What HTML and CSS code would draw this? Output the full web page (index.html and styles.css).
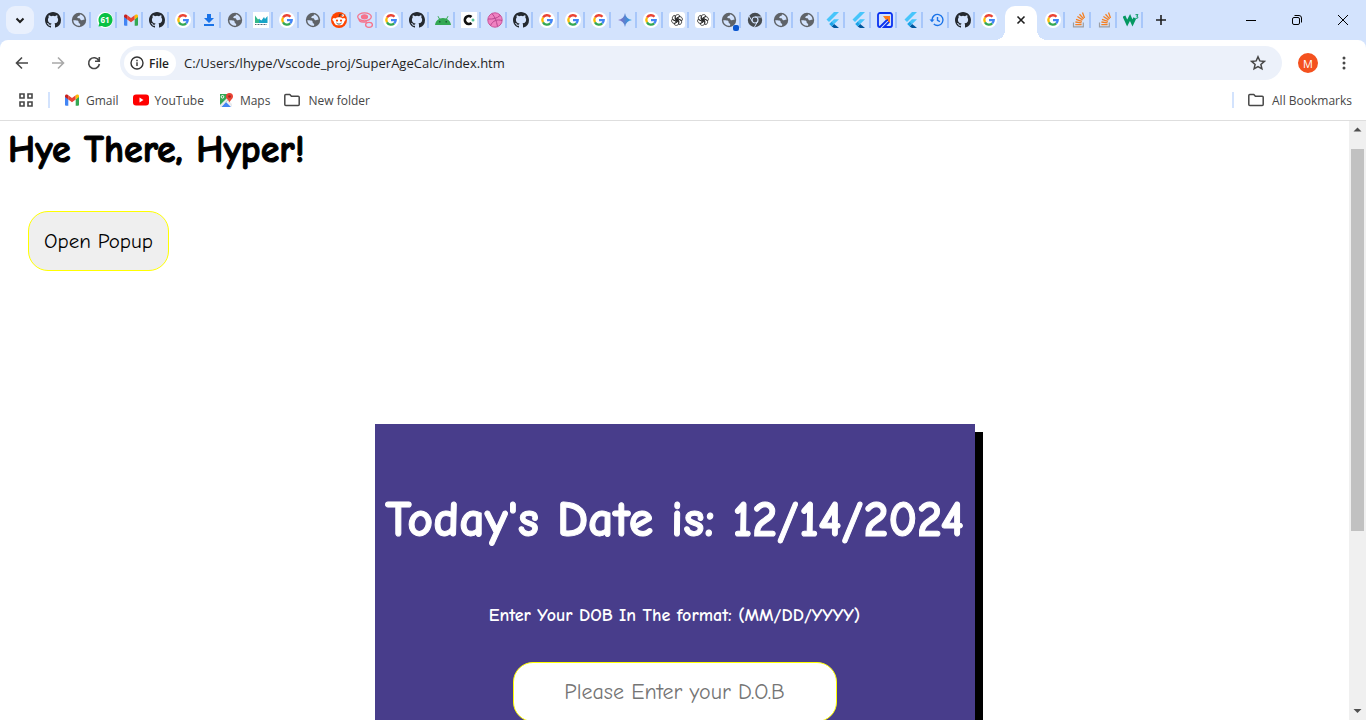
FILE: index.html
```html
<!DOCTYPE html>
<html lang="en">
<head>
<meta charset="utf-8">
<title>Super Age Calc</title>
<link rel="stylesheet" href="styles.css">
<script src="tabs.js" defer></script>
</head>
<body>
<svg class="sprite" aria-hidden="true">
  <symbol id="github" viewBox="0 0 16 16"><path fill="#24292f" d="M8 0C3.58 0 0 3.58 0 8c0 3.54 2.29 6.53 5.47 7.59.4.07.55-.17.55-.38 0-.19-.01-.82-.01-1.49-2.01.37-2.53-.49-2.69-.94-.09-.23-.48-.94-.82-1.13-.28-.15-.68-.52-.01-.53.63-.01 1.08.58 1.23.82.72 1.21 1.87.87 2.33.66.07-.52.28-.87.51-1.07-1.78-.2-3.64-.89-3.64-3.95 0-.87.31-1.59.82-2.15-.08-.2-.36-1.02.08-2.12 0 0 .67-.21 2.2.82a7.6 7.6 0 0 1 4 0c1.53-1.04 2.2-.82 2.2-.82.44 1.1.16 1.92.08 2.12.51.56.82 1.27.82 2.15 0 3.07-1.87 3.75-3.65 3.95.29.25.54.73.54 1.48 0 1.07-.01 1.93-.01 2.2 0 .21.15.46.55.38A8.01 8.01 0 0 0 16 8c0-4.42-3.58-8-8-8z"/></symbol>
  <symbol id="globe" viewBox="0 0 16 16"><circle cx="8" cy="8" r="7.2" fill="#5f6368"/><path fill="#d3e3fd" d="M2.2 8.3c1.900 0 4.100-.1 5 .8.700.800.200 1.600.900 2.100.800.500 1.200.300 1.100 1.300l-.2 1.200A5.900 5.900 0 0 1 2.200 8.300zM8.900 2.300c.200 1.200-.1 1.500-1.300 1.700-1 .200-.8 1-1.500 1.300.2 1 1.200.9 2.200 1 1.100.2 1 1.800 2 2 1 .2 1.600-.7 3.200-.4A5.900 5.900 0 0 0 8.900 2.300z"/></symbol>
  <symbol id="google" viewBox="0 0 16 16"><circle cx="8" cy="8" r="8" fill="#fff"/><g fill="none" stroke-width="2.300"><path stroke="#ea4335" d="M4 5.500A4.700 4.700 0 0 1 11.500 4.800"/><path stroke="#fbbc05" d="M4 10.300a4.700 4.700 0 0 1 0-4.800"/><path stroke="#34a853" d="M11.200 11.400A4.700 4.700 0 0 1 4 10.300"/><path stroke="#4285f4" d="M8 8.200h4.700a4.700 4.700 0 0 1-1.500 3.200"/></g></symbol>
  <symbol id="gmail" viewBox="0 0 16 16"><path fill="#4285f4" d="M1 4.500l3.300 2.400v6.800H2a1 1 0 0 1-1-1z"/><path fill="#34a853" d="M15 4.500l-3.300 2.400v6.800H14a1 1 0 0 0 1-1z"/><path fill="#ea4335" d="M4.300 3.300L8 6l3.700-2.700v4.100L8 10.200 4.300 7.400z"/><path fill="#c5221f" d="M1 4c0-1.600 1.500-2 2.600-1.200l.7.5v4.100L1 5z"/><path fill="#fbbc04" d="M15 4c0-1.600-1.500-2-2.600-1.200l-.7.500v4.100L15 5z"/></symbol>
  <symbol id="whatsapp" viewBox="0 0 16 16"><circle cx="8" cy="8" r="8" fill="#fff"/><path d="M1.500 14.500l.8-3.300A7 7 0 1 1 5 14z" fill="#08c143"/></symbol>
  <symbol id="download" viewBox="0 0 16 16"><path fill="#1a73e8" d="M6 2h4v4h3L8 11 3 6h3zM3 12h10v2H3z"/></symbol>
  <symbol id="mw" viewBox="0 0 16 16"><path fill="#fff" d="M0 0h16v16H0z"/><path fill="#35b98a" d="M2 3.500l3 4 1.500-1V11H2z"/><path fill="#18a4c7" d="M6 7l2.500 1.500L11 5l1 2 2.500-3v7H6z"/><path stroke="#567" stroke-dasharray="1 .5" d="M2 12.500h12"/></symbol>
  <symbol id="reddit" viewBox="0 0 16 16"><circle cx="8" cy="8" r="8" fill="#ff4500"/><circle cx="3" cy="7.600" r="1.500" fill="#fff"/><circle cx="13" cy="7.600" r="1.500" fill="#fff"/><ellipse cx="8" cy="9.300" rx="5.300" ry="4" fill="#fff"/><circle cx="11.700" cy="3.500" r="1.200" fill="#fff"/><path d="M8 5l.6-2.500 3 .8M5.500 11c1.500 1.500 3.500 1.500 5 0" fill="none" stroke="#243c44" stroke-width=".8"/><circle cx="6" cy="8.600" r="1.100" fill="#ff4500"/><circle cx="10" cy="8.600" r="1.100" fill="#ff4500"/></symbol>
  <symbol id="rings" viewBox="0 0 16 16"><g fill="none" stroke="#f5738c" stroke-width="1.300"><ellipse cx="7.500" cy="4.800" rx="6.800" ry="4"/><ellipse cx="7.500" cy="4.800" rx="3" ry="2" fill="#f5738c"/><ellipse cx="12" cy="12.800" rx="3.400" ry="2.500"/><path d="M2 7c0 2 2 3 4 3h4"/></g></symbol>
  <symbol id="android" viewBox="0 0 16 16"><path fill="#34a853" d="M0 13c.3-3 2-5 4-6L2.500 4.300l.7-.4L4.800 6.500a9 9 0 0 1 6.400 0l1.600-2.600.7.400L12 7c2 1 3.700 3 4 6z"/><path fill="#1b5e36" d="M4 9h1.500v1.500H4zM10.500 9H12v1.500h-1.500z"/></symbol>
  <symbol id="cdot" viewBox="0 0 16 16"><path fill="#fff" d="M0 0h16v16H0z"/><path fill="none" stroke="#111" stroke-width="2.600" d="M10.500 5A4 4 0 1 0 10.500 11"/><circle cx="12" cy="8" r="1.500" fill="#56c596"/></symbol>
  <symbol id="dribbble" viewBox="0 0 16 16"><circle cx="8" cy="8" r="7.200" fill="#f082c1" stroke="#c9539b"/><path d="M5 1.500C8 5 9.500 9 10.500 14.500M1 7c5 .3 9-.5 12-3.500M3.500 13.500C6 8.500 10 7 15 8.500" fill="none" stroke="#b8478f"/></symbol>
  <symbol id="gemini" viewBox="0 0 16 16"><path fill="url(#gem)" d="M8 1c.6 4 3 6.400 7 7-4 .6-6.400 3-7 7-.6-4-3-6.400-7-7 4-.6 6.400-3 7-7z"/></symbol>
  <linearGradient id="gem"><stop stop-color="#9168c0"/><stop offset=".5" stop-color="#5684d1"/><stop offset="1" stop-color="#1ba1e3"/></linearGradient>
  <symbol id="gpt" viewBox="0 0 16 16"><rect width="16" height="16" rx="3" fill="#fff"/><g fill="none" stroke="#222" stroke-width=".8"><path id="petal" d="M6.300 9V5.200c0-3.200 4-3.300 4.700-1L7.800 6.100v2.800"/><use href="#petal" transform="rotate(60 8 8)"/><use href="#petal" transform="rotate(120 8 8)"/><use href="#petal" transform="rotate(180 8 8)"/><use href="#petal" transform="rotate(240 8 8)"/><use href="#petal" transform="rotate(300 8 8)"/></g></symbol>
  <symbol id="chromium" viewBox="0 0 16 16"><circle cx="8" cy="8" r="7.200" fill="#474c50"/><circle cx="8" cy="8" r="3" fill="none" stroke="#d3e3fd" stroke-width="1.200"/><path stroke="#d3e3fd" d="M8 5h6.500M5.400 9.500L2 4M10.600 9.500L7.500 15"/></symbol>
  <symbol id="flutter" viewBox="0 0 16 16"><path fill="#47c5fb" d="M9 0h5L4 10 1.500 7.500zM9 7.200h5L9.200 12 6.600 9.500z"/><path fill="#00569e" d="M6.700 14.400L9.200 12l4.800 4H9z"/><path fill="#1ba3e8" d="M4.200 12l2.500-2.500L9.200 12l-2.500 2.500z"/></symbol>
  <symbol id="arrowbox" viewBox="0 0 16 16"><path d="M10 1H3a2 2 0 0 0-2 2v10q0 2 2 2l9-9v4l-5 5h6a2 2 0 0 0 2-2V3a2 2 0 0 0-2-2z" fill="#d3e3fd" stroke="#0a32f0" stroke-width="1.800"/><path fill="#ff7a18" d="M6 4h7v7l-2-2V7L9 8z"/></symbol>
  <symbol id="history" viewBox="0 0 16 16"><path fill="none" stroke="#1a73e8" stroke-width="1.400" d="M3 8a5.500 5.500 0 1 1 1.800 4M8.500 5v3.300l2.400 1.400"/><path fill="#1a73e8" d="M.5 7.500h5L3 10.200z"/></symbol>
  <symbol id="stack" viewBox="0 0 16 16"><path fill="none" stroke="#9b9ea3" stroke-width="1.200" d="M2.500 10.500v4.300h9.800v-4.300"/><path fill="none" stroke="#f48024" stroke-width="1.300" d="M4.300 12.600h6.300M4.400 10l6.200.9M5 7.300l5.900 2M6.400 4.500l5.200 3.400M8.500 2.300l4.100 4.600M11.500.6l2 5.300"/></symbol>
  <symbol id="w3" viewBox="0 0 16 16"><path fill="none" stroke="#059862" stroke-width="3" d="M1 4l3.200 7L7 5.500l2.500 5.500L11.800 6"/><path fill="none" stroke="#059862" d="M12.500 2.700H15L13.700 4.300q1.600.2 1.200 1.400-.7 1-2.200.5"/></symbol>
  <symbol id="folder" viewBox="0 0 16 16"><path fill="none" stroke="#474747" stroke-width="1.500" stroke-linejoin="round" d="M.8 3.500q0-1 1-1h4l1.600 1.800h6.800q1 0 1 1v7.200q0 1-1 1H1.800q-1 0-1-1z"/></symbol>
</svg>

<header class="browser">
  <nav class="tabstrip" aria-label="Tabs">
    <button class="tab-search" aria-label="Search tabs"><svg viewBox="0 0 16 16"><path d="M4.500 6.500L8 10l3.500-3.500"/></svg></button>
    <div class="tabs" id="tabs-before"></div>
    <button class="tab-active" aria-label="Close tab"><svg viewBox="0 0 16 16"><path d="M4.500 4.500l7 7M11.500 4.500l-7 7"/></svg></button>
    <div class="tabs" id="tabs-after"></div>
    <button class="new-tab" aria-label="New tab"><svg viewBox="0 0 16 16"><path d="M8 3v10M3 8h10"/></svg></button>
    <div class="window-controls">
      <button aria-label="Minimize"><svg viewBox="0 0 16 16"><path d="M3 8.500h10"/></svg></button>
      <button aria-label="Restore"><svg viewBox="0 0 16 16"><rect x="3.500" y="5.500" width="7" height="7" rx="1.500"/><path d="M5.500 3.500h4.500a2.500 2.500 0 0 1 2.500 2.500v4.500"/></svg></button>
      <button aria-label="Close"><svg viewBox="0 0 16 16"><path d="M3 3l10 10M13 3L3 13"/></svg></button>
    </div>
  </nav>
  <div class="toolbar">
    <button class="nav-button" aria-label="Back"><svg viewBox="0 0 16 16"><path d="M14 8H3M8 2.500L2.500 8 8 13.500"/></svg></button>
    <button class="nav-button disabled" aria-label="Forward" disabled><svg viewBox="0 0 16 16"><path d="M2 8h11M8 2.500L13.500 8 8 13.500"/></svg></button>
    <button class="nav-button" aria-label="Reload"><svg viewBox="0 0 16 16"><path d="M12.800 5.500A5.400 5.400 0 1 0 13.400 9M13.300 2v4.200H9"/></svg></button>
    <div class="omnibox">
      <button class="file-chip"><svg viewBox="0 0 16 16"><circle cx="8" cy="8" r="6"/><path d="M8 7.200V11M8 4.800v1.400"/></svg>File</button>
      <input class="address" aria-label="Address" value="C:/Users/lhype/Vscode_proj/SuperAgeCalc/index.htm">
      <button class="star" aria-label="Bookmark this page"><svg viewBox="0 0 16 16"><path d="M8 1.800l1.800 4.100 4.500.5-3.400 3 1 4.400L8 11.500l-3.900 2.300 1-4.400-3.400-3 4.500-.5z"/></svg></button>
    </div>
    <button class="avatar" aria-label="Profile">M</button>
    <button class="menu" aria-label="Menu"><svg viewBox="0 0 16 16"><circle cx="8" cy="3" r="1.500"/><circle cx="8" cy="8" r="1.500"/><circle cx="8" cy="13" r="1.500"/></svg></button>
  </div>
  <div class="bookmarks">
    <button class="apps" aria-label="Apps"><svg viewBox="0 0 16 16"><path d="M2 2h4v4H2zM10 2h4v4h-4zM2 10h4v4H2zM10 10h4v4h-4z"/></svg></button>
    <span class="divider"></span>
    <a href="#"><svg><use href="#gmail"/></svg>Gmail</a>
    <a href="#"><svg viewBox="0 0 16 16"><rect y="2.500" width="16" height="11" rx="3" fill="#f00"/><path fill="#fff" d="M6.500 5.500v5L10.500 8z"/></svg>YouTube</a>
    <a href="#"><svg viewBox="0 0 16 16"><path fill="#34a853" d="M2 2h8l2 4-9 9H2z"/><path fill="#4285f4" d="M3 15l5-5 5 5z"/><path fill="#e8eaed" d="M2 13l8-8 1.300 1.300L3.500 15H2zM9 10l1.500-1.500L14 12v3z"/><path fill="#ea4335" d="M11.500 1a3.500 3.500 0 0 1 3.500 3.500c0 2.500-2.500 3-3.500 6-1-3-3.500-3.500-3.500-6A3.500 3.500 0 0 1 11.500 1z"/><circle cx="11.500" cy="4.500" r="1.300" fill="#9c2b22"/><circle cx="4.500" cy="4.800" r="1.300" fill="none" stroke="#fff"/></svg>Maps</a>
    <a class="folder" href="#"><svg><use href="#folder"/></svg>New folder</a>
    <span class="divider push"></span>
    <a class="folder" href="#"><svg><use href="#folder"/></svg>All Bookmarks</a>
  </div>
</header>

<div class="viewport">
  <main class="page">
    <h1 class="greeting">Hye There, Hyper!</h1>
    <button class="popup-button">Open Popup</button>
    <section class="card">
      <h2 class="today">Today's Date is: 12/14/2024</h2>
      <label class="dob-label" for="dob">Enter Your DOB In The format: (MM/DD/YYYY)</label>
      <input class="dob" id="dob" type="text" placeholder="Please Enter your D.O.B">
    </section>
  </main>
  <div class="scrollbar" aria-hidden="true">
    <svg viewBox="0 0 17 17"><path d="M8.500 6.500l4 4h-8z"/></svg>
    <div class="track"><div class="thumb"></div></div>
    <svg viewBox="0 0 17 17"><path d="M8.500 10l4-4h-8z"/></svg>
  </div>
</div>
</body>
</html>
```
FILE: styles.css
```css
* { box-sizing: border-box; }
body {
  margin: 0;
  height: 100vh;
  display: flex;
  flex-direction: column;
  overflow: hidden;
  background: #fff;
  font-family: "Segoe UI", "Open Sans", "Noto Sans", sans-serif;
  font-size: 12px;
}
button, input { font: inherit; }
button { border: 0; padding: 0; background: none; display: flex; align-items: center; justify-content: center; flex: none; }
svg { width: 16px; height: 16px; flex: none; display: block; }
.sprite { position: absolute; width: 0; height: 0; }

.browser { flex: none; background: #d3e3fd; }
.tabstrip { display: flex; height: 40px; align-items: center; }
.tab-search { width: 28px; height: 28px; margin: 0 5px 0 6px; border-radius: 9px; background: #e9f0fd; }
.tab-search svg, .tab-active svg, .new-tab svg { fill: none; stroke: #1f1f1f; stroke-width: 2; }
.tab-active svg, .new-tab svg { stroke-width: 1.6; }
.tabs { display: flex; }
.tab { width: 26px; height: 16px; padding-left: 4px; border-right: 2px solid #a8c7fa; position: relative; }
.tab.plain { border-color: transparent; }
.tab.notice::after { content: ""; position: absolute; right: 0; bottom: -3px; width: 6px; height: 6px; border-radius: 2px; background: #0b57d0; }
.tab-count { fill: #fff; font-size: 8px; font-weight: 700; text-anchor: middle; }
.tab-active { position: relative; width: 32px; height: 34px; margin: 6px 2px 0 4px; padding-bottom: 6px; border-radius: 10px 10px 0 0; background: #fff; }
.tab-active::before, .tab-active::after { content: ""; position: absolute; bottom: 0; width: 10px; height: 10px; }
.tab-active::before { right: 100%; background: radial-gradient(circle at 0 0, transparent 10px, #fff 10px); }
.tab-active::after { left: 100%; background: radial-gradient(circle at 100% 0, transparent 10px, #fff 10px); }
.new-tab { width: 36px; height: 28px; }
.window-controls { display: flex; margin-left: auto; }
.window-controls button { width: 46px; height: 40px; }
.window-controls svg { fill: none; stroke: #000; stroke-width: 1; }

.toolbar { display: flex; align-items: center; height: 46px; padding: 0 8px 0 4px; background: #fff; border-radius: 8px 8px 0 0; }
.nav-button { width: 36px; height: 36px; }
.nav-button svg { fill: none; stroke: #474747; stroke-width: 1.6; }
.nav-button.disabled svg { stroke: #a9a9a9; }
.omnibox { flex: 1; display: flex; align-items: center; height: 34px; margin: 0 12px 0 8px; padding: 0 16px 0 4px; border-radius: 17px; background: #ecf1fa; }
.file-chip { height: 26px; padding: 0 7px 0 5px; gap: 4px; border-radius: 13px; background: #fff; color: #1f1f1f; font-weight: 600; }
.file-chip svg { fill: none; stroke: #333; stroke-width: 1.4; }
.address { flex: 1; min-width: 0; border: 0; padding: 0 8px; background: none; color: #1f1f1f; font-size: 13px; outline: 0; }
.star svg { fill: none; stroke: #474747; stroke-width: 1.5; }
.avatar { width: 28px; height: 28px; border: 4px solid #fff; border-radius: 50%; background: #f4511e; color: #fff; font-size: 11px; }
.menu { width: 28px; height: 32px; margin-left: 8px; }
.menu svg { fill: #474747; }

.bookmarks { display: flex; align-items: center; height: 35px; padding: 0 14px 6px 18px; background: #fff; border-bottom: 1px solid #dedede; color: #474747; }
.bookmarks a { display: flex; align-items: center; gap: 6px; margin-right: 14px; color: inherit; text-decoration: none; }
.bookmarks .folder { gap: 8px; }
.bookmarks a:last-child { margin-right: 0; }
.apps svg { fill: none; stroke: #474747; stroke-width: 1.6; }
.divider { width: 2px; height: 16px; margin: 0 14px; background: #d3e3fd; }
.divider.push { margin: 0 14px 0 auto; }

.viewport { flex: 1; min-height: 0; display: flex; }
.page { flex: 1; overflow: hidden; padding: 0 8px; font-family: "Comic Sans MS", "Comic Neue", "Noto Sans", sans-serif; }
.greeting { margin: 4px 0 36px; font-size: 38px; line-height: 50px; color: #000; -webkit-text-stroke: 1px; }
.popup-button { height: 60px; margin-left: 20px; padding: 0 15px; border: 1px solid #ff0; border-radius: 20px; background: #efefef; color: #000; font-family: inherit; font-size: 21px; }
.card { width: 600px; max-width: 100%; min-height: 600px; margin: 153px auto 0; padding-top: 64px; display: flex; flex-direction: column; align-items: center; background: #483d8b; color: #fff; box-shadow: 8px 8px 0 #000; }
.today { margin: 0; font-size: 50px; line-height: 64px; white-space: nowrap; -webkit-text-stroke: 1px; }
.dob-label { margin: 52px 0 34px; font-size: 18px; line-height: 24px; font-weight: 600; }
.dob { width: 324px; height: 60px; border: 1px solid #ff0; border-radius: 20px; background: #fff; font-family: inherit; font-size: 22px; text-align: center; }
.dob::placeholder { color: #757575; }

.scrollbar { width: 17px; flex: none; display: flex; flex-direction: column; background: #f0f0f0; }
.scrollbar svg { width: 17px; height: 17px; fill: #505050; }
.track { flex: 1; padding: 11px 2px 0; }
.thumb { height: 69%; background: #c1c1c1; }
```
FILE: tabs.js
```js
const before = "github globe whatsapp gmail github google download globe mw google globe reddit rings google github android cdot dribbble github google google google gemini google gpt gpt globe chromium globe globe flutter flutter arrowbox flutter history github google".split(" ");
const after = "google stack stack w3".split(" ");

function fill(id, names) {
  document.getElementById(id).innerHTML = names.map(name => {
    const count = name === "whatsapp" ? '<text class="tab-count" x="8" y="11">61</text>' : "";
    return `<button class="tab" aria-label="${name} tab"><svg viewBox="0 0 16 16"><use href="#${name}"/>${count}</svg></button>`;
  }).join("");
}

fill("tabs-before", before);
fill("tabs-after", after);
document.querySelector("#tabs-before .tab:last-child").classList.add("plain");
document.querySelectorAll("#tabs-before .tab")[26].classList.add("notice");
```
